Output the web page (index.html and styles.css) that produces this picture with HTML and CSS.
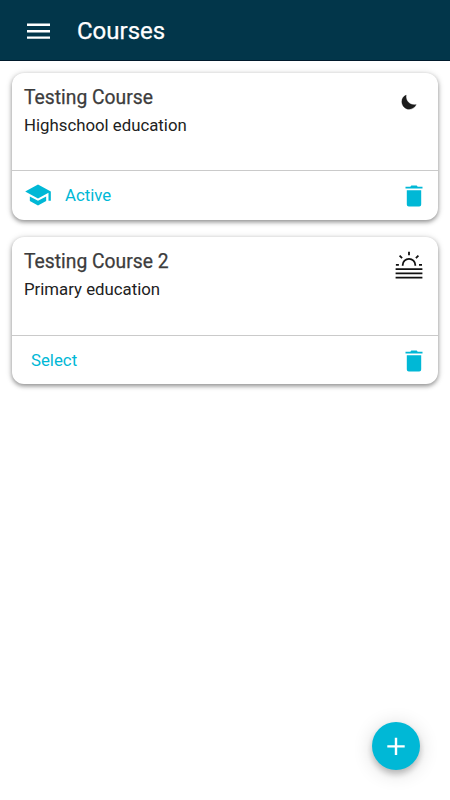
FILE: index.html
```html
<!DOCTYPE html>
<html lang="en">
<head>
<meta charset="utf-8">
<meta name="viewport" content="width=device-width, initial-scale=1">
<title>Courses</title>
<link rel="stylesheet" href="styles.css">
</head>
<body>
<header class="app-bar">
  <button class="menu" aria-label="Menu"><svg width="23" height="16" viewBox="0 0 23 16"><path d="M0 .5h23v2.4H0zM0 7h23v2.4H0zM0 13.4h23v2.4H0z" fill="currentColor"/></svg></button>
  <h1 class="app-title">Courses</h1>
</header>
<main class="courses">
  <article class="card">
    <div class="card-body">
      <div>
        <h2 class="card-title">Testing Course</h2>
        <p class="card-level">Highschool education</p>
      </div>
      <svg class="shift-icon" width="28" height="30" viewBox="0 0 28 30"><path d="M11.2 8.1C8.5 9.1 6.8 11.6 6.8 14.4 6.8 18.9 10.1 22.2 14.2 22.2 17.4 22.2 20 20.4 21.2 17.6 15.2 18.8 10.2 14 11.2 8.1z" fill="#1c1c1c" stroke="#1c1c1c" stroke-width=".3"/></svg>
    </div>
    <div class="card-actions">
      <button class="action"><svg class="school-icon" width="28" height="28" viewBox="0 0 24 24"><path d="M5 13.18v4L12 21l7-3.82v-4L12 17l-7-3.82zM12 3L1 9l11 6 9-4.91V17h2V9L12 3z" fill="currentColor"/></svg><span>Active</span></button>
      <button class="delete" aria-label="Delete"><svg width="18" height="22" viewBox="0 0 18 22"><path d="M.5 1.7h4.8L6.3.4h5.4l1 1.3h4.8v1.9H.5zM1.8 5.2h14.4v14.4a2 2 0 0 1-2 2H3.8a2 2 0 0 1-2-2z" fill="currentColor"/></svg></button>
    </div>
  </article>
  <article class="card">
    <div class="card-body">
      <div>
        <h2 class="card-title">Testing Course 2</h2>
        <p class="card-level">Primary education</p>
      </div>
      <svg class="shift-icon" width="28" height="30" viewBox="0 0 28 30" fill="none" stroke="#111" stroke-width="1.8"><path d="M7.7 14.8v-.7a6.3 6.3 0 0 1 12.6 0v.7M.9 13.9h3M24 13.9h3M14 .8v3.4M4.6 4.6l2.5 2.5M23.4 4.6l-2.5 2.5M.6 18.2h26.8M.6 22.4h26.8M.6 26.7h26.8"/></svg>
    </div>
    <div class="card-actions">
      <button class="action action-plain"><span>Select</span></button>
      <button class="delete" aria-label="Delete"><svg width="18" height="22" viewBox="0 0 18 22"><path d="M.5 1.7h4.8L6.3.4h5.4l1 1.3h4.8v1.9H.5zM1.8 5.2h14.4v14.4a2 2 0 0 1-2 2H3.8a2 2 0 0 1-2-2z" fill="currentColor"/></svg></button>
    </div>
  </article>
</main>
<button class="fab" aria-label="Add course"><svg width="18" height="18" viewBox="0 0 18 18"><path d="M7.8.8h2.4v7.4h7.5v2.4h-7.5V18H7.8v-7.4H.3V8.2h7.5z" fill="currentColor"/></svg></button>
</body>
</html>
```
FILE: styles.css
```css
* { box-sizing: border-box; }
body {
  margin: 0;
  min-height: 100vh;
  background: #fff;
  color: #212121;
  font-family: Roboto, sans-serif;
}
h1, h2, p { margin: 0; }
button {
  display: flex;
  align-items: center;
  padding: 0;
  border: 0;
  background: none;
  color: inherit;
  font: inherit;
}
svg { display: block; flex: none; }
.app-bar {
  display: flex;
  align-items: center;
  height: 61px;
  padding: 2px 27px 0;
  border-bottom: 1px solid #001a2c;
  background: #02364a;
  color: #fff;
}
.menu { margin-right: 27px; }
.app-title {
  font-size: 24px;
  font-weight: 400;
  line-height: 30px;
  -webkit-text-stroke: 0.25px currentColor;
}
.courses {
  display: flex;
  flex-direction: column;
  gap: 17.7px;
  padding: 12px;
}
.card {
  height: 146.6px;
  border-radius: 12px;
  background: #fff;
  box-shadow: 0 2px 4px rgba(0, 0, 0, .36), 0 1px 7px rgba(0, 0, 0, .16);
}
.card-body {
  display: flex;
  justify-content: space-between;
  height: 98.4px;
  padding: 12.6px 15px 0 12px;
  border-bottom: 1px solid #cacaca;
}
.card-title {
  font-size: 19.3px;
  font-weight: 400;
  line-height: 24px;
  color: #3c3c3c;
  -webkit-text-stroke: 0.25px currentColor;
}
.card-level {
  margin-top: 4px;
  font-size: 16.8px;
  line-height: 22px;
}
.shift-icon { margin-top: 1px; }
.card-actions {
  display: flex;
  align-items: center;
  justify-content: space-between;
  height: 48px;
  padding: 2px 15px 0 12px;
  color: #00b8d6;
}
.action {
  gap: 13px;
  padding: 0 0 2px;
  font-size: 16.8px;
  line-height: 22px;
}
.action-plain { padding-left: 7px; }
.fab {
  position: fixed;
  right: 30px;
  bottom: 30px;
  justify-content: center;
  width: 48px;
  height: 48px;
  border-radius: 50%;
  background: #00b8d6;
  color: #fff;
  box-shadow: 0 4px 6px rgba(0, 0, 0, .22), 0 3px 20px rgba(0, 0, 0, .16);
}
```
